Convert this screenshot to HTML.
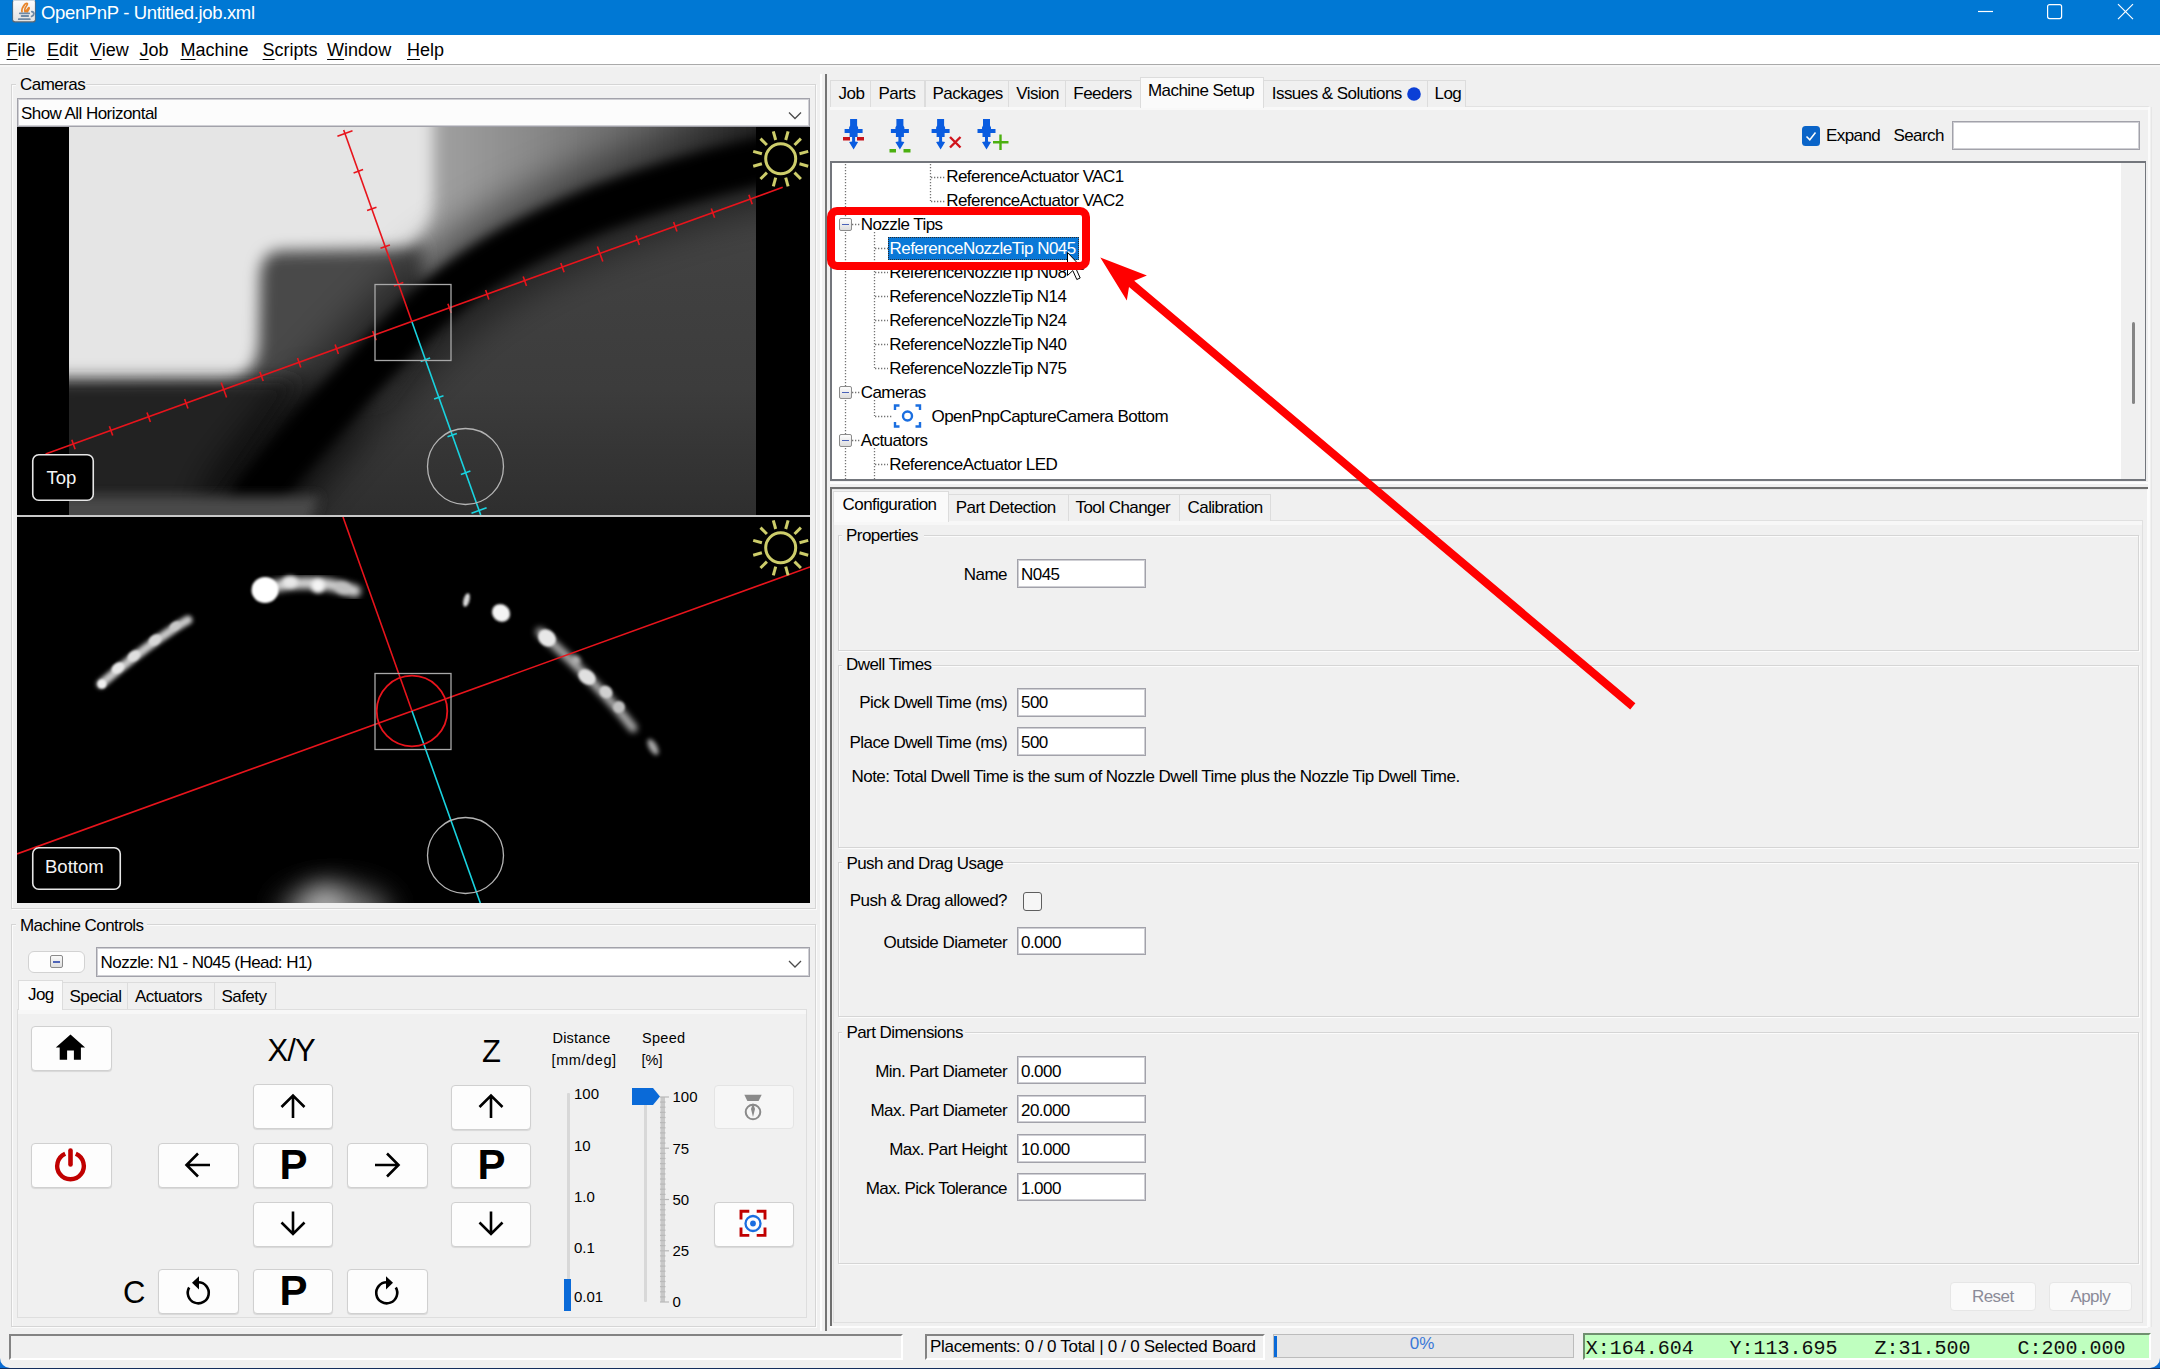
<!DOCTYPE html><html><head><meta charset="utf-8"><title>OpenPnP</title><style>
html,body{margin:0;padding:0;}
body{width:2160px;height:1369px;overflow:hidden;position:relative;background:#f0f0f0;font-family:"Liberation Sans", sans-serif;}
.a{position:absolute;box-sizing:border-box;}
.t{position:absolute;white-space:pre;}
.ff-s{font-family:"Liberation Sans", sans-serif;}
.ff-m{font-family:"Liberation Mono", monospace;}
svg{position:absolute;overflow:visible;}
u{text-decoration:underline;text-underline-offset:2.5px;text-decoration-thickness:1.4px;}
</style></head><body>
<div class="a" style="left:0px;top:0px;width:2160px;height:35px;background:#0078d4"></div>
<svg style="left:12px;top:0px" width="25" height="23" viewBox="0 0 25 23">
<defs><linearGradient id="jg" x1="0" y1="0" x2="0" y2="1"><stop offset="0" stop-color="#fdfdfd"/><stop offset="1" stop-color="#e2e2e2"/></linearGradient></defs>
<rect x="0.3" y="0" width="23.4" height="22.4" rx="2.5" fill="#5f6870"/>
<rect x="1.1" y="0" width="21.8" height="21.3" rx="2" fill="url(#jg)"/>
<rect x="1.1" y="0" width="21.8" height="1" fill="#cdd6de"/>
<path d="M10 11.8 C9.2 9 11 6.6 12.6 4.6 C13.4 3.6 14.8 2.8 15.4 3.6 C15.7 4.8 14 6.4 13.2 8 C12.7 9.2 12.6 10.4 13 11.8 M14 11.6 C14.4 10 15.8 9 16.6 7.8 C17 7.2 17.4 8 17 9 C16.4 10.4 15.6 11 15.3 12" stroke="#e8852a" stroke-width="1.7" fill="none" stroke-linecap="round"/>
<path d="M7.8 13.3 H17.2 M9.6 16 H16.2 M6.8 19.2 H17.8 M19.8 11.6 C22.6 12 22.6 15.6 19.6 16.4" stroke="#6f8aa6" stroke-width="1.8" fill="none" stroke-linecap="round"/>
</svg>
<div class="t ff-s" style="top:3.64px;font-size:18.5px;line-height:18.5px;color:#ffffff;left:41px;letter-spacing:-0.35px;">OpenPnP - Untitled.job.xml</div>
<svg style="left:1970px;top:0px" width="190" height="35" viewBox="1970 0 190 35">
<line x1="1978" y1="11.5" x2="1993" y2="11.5" stroke="#fff" stroke-width="1.2"/>
<rect x="2047.6" y="4.6" width="14" height="14" rx="2" fill="none" stroke="#fff" stroke-width="1.2"/>
<path d="M2118 4.2 L2133 19.2 M2133 4.2 L2118 19.2" stroke="#fff" stroke-width="1.2"/>
</svg>
<div class="a" style="left:0px;top:35px;width:2160px;height:29px;background:#ffffff"></div>
<div class="a" style="left:0px;top:64px;width:2160px;height:1.2px;background:#aaaaaa"></div>
<div class="a" style="left:0px;top:65px;width:2160px;height:2px;background:#f6f6f6"></div>
<div class="t ff-s" style="top:40.76px;font-size:18px;line-height:18px;color:#000;left:6.6px;"><u>F</u>ile</div>
<div class="t ff-s" style="top:40.76px;font-size:18px;line-height:18px;color:#000;left:47px;"><u>E</u>dit</div>
<div class="t ff-s" style="top:40.76px;font-size:18px;line-height:18px;color:#000;left:90px;"><u>V</u>iew</div>
<div class="t ff-s" style="top:40.76px;font-size:18px;line-height:18px;color:#000;left:139.6px;"><u>J</u>ob</div>
<div class="t ff-s" style="top:40.76px;font-size:18px;line-height:18px;color:#000;left:180.5px;"><u>M</u>achine</div>
<div class="t ff-s" style="top:40.76px;font-size:18px;line-height:18px;color:#000;left:262.6px;"><u>S</u>cripts</div>
<div class="t ff-s" style="top:40.76px;font-size:18px;line-height:18px;color:#000;left:327.1px;"><u>W</u>indow</div>
<div class="t ff-s" style="top:40.76px;font-size:18px;line-height:18px;color:#000;left:407px;"><u>H</u>elp</div>
<div class="a" style="left:11px;top:84px;width:805px;height:825px;border:1px solid #d5d5d5;box-shadow:inset 1px 1px 0 #fbfbfb, 1px 1px 0 #fbfbfb;"></div>
<div class="a" style="left:16px;top:81px;width:70px;height:6px;background:#f0f0f0"></div>
<div class="t ff-s" style="top:76.11px;font-size:17px;line-height:17px;color:#000;left:20px;letter-spacing:-0.55px;">Cameras</div>
<div class="a" style="left:17px;top:98px;width:793px;height:29px;background:#fcfcfc;border:1px solid #a2a2aa;box-shadow:inset 0 0 0 1px #cfcfd4;"></div>
<div class="t ff-s" style="top:105.11px;font-size:17px;line-height:17px;color:#000;left:21px;letter-spacing:-0.55px;">Show All Horizontal</div>
<svg style="left:0;top:0" width="1" height="1"><polyline points="789,112.5 795,118.5 801,112.5" fill="none" stroke="#4a4a4a" stroke-width="1.3"/></svg>
<svg style="left:17px;top:127px;overflow:hidden" width="793" height="388" viewBox="17 127 793 388">
<defs>
<filter id="bl4" filterUnits="userSpaceOnUse" x="-200" y="-200" width="1400" height="1000"><feGaussianBlur stdDeviation="4"/></filter>
<filter id="bl6" filterUnits="userSpaceOnUse" x="-200" y="-200" width="1400" height="1000"><feGaussianBlur stdDeviation="6"/></filter>
<filter id="bl8" filterUnits="userSpaceOnUse" x="-200" y="-200" width="1400" height="1000"><feGaussianBlur stdDeviation="7.5"/></filter>
<filter id="bl9" filterUnits="userSpaceOnUse" x="-200" y="-200" width="1400" height="1000"><feGaussianBlur stdDeviation="9"/></filter>
<filter id="bl18" filterUnits="userSpaceOnUse" x="-200" y="-200" width="1400" height="1000"><feGaussianBlur stdDeviation="18"/></filter>
<filter id="noise" filterUnits="userSpaceOnUse" x="17" y="127" width="793" height="388"><feTurbulence type="fractalNoise" baseFrequency="0.9" numOctaves="1" seed="3"/><feColorMatrix type="matrix" values="0 0 0 0 0.5  0 0 0 0 0.5  0 0 0 0 0.5  0 0 0 0.10 0"/></filter>
<linearGradient id="umid" x1="430" y1="0" x2="760" y2="0" gradientUnits="userSpaceOnUse">
<stop offset="0" stop-color="#a2a2a2"/><stop offset="0.3" stop-color="#8a8a8a"/><stop offset="0.65" stop-color="#666666"/><stop offset="1" stop-color="#333333"/></linearGradient>
<linearGradient id="lowr" x1="0" y1="200" x2="0" y2="515" gradientUnits="userSpaceOnUse">
<stop offset="0" stop-color="#434343"/><stop offset="0.6" stop-color="#3c3c3c"/><stop offset="1" stop-color="#2e2e2e"/></linearGradient>
</defs>
<rect x="17" y="127" width="793" height="388" fill="url(#lowr)"/>
<polygon points="400,90 820,90 820,145 700,168 600,198 520,235 450,275 400,300" fill="url(#umid)" filter="url(#bl6)"/>
<polygon points="240,250 420,240 430,330 380,400 240,400" fill="#4a4a4a" filter="url(#bl9)"/>
<path d="M40,90 L433,90 L433,196 C433,228 420,248 392,249 L280,251 C266,252 260,262 260,280 L259,342 C258,366 244,384 220,385 L40,387 Z" fill="#e5e5e5" filter="url(#bl8)"/>
<polygon points="40,380 300,380 240,470 215,505 40,505" fill="#232323" filter="url(#bl9)"/>
<path d="M330,400 C300,430 270,470 235,520" stroke="#000" stroke-width="70" stroke-opacity="0.55" fill="none" filter="url(#bl18)"/>
<path d="M830,150 L756,162 C720,170 660,186 600,208 C540,232 490,258 450,290 C420,314 390,345 350,388 C320,420 285,460 258,494 L235,540" stroke="#000" stroke-width="95" stroke-opacity="0.45" fill="none" filter="url(#bl18)"/>
<path d="M830,150 L756,162 C720,170 660,186 600,208 C540,232 490,258 450,290 C420,314 390,345 350,388 C320,420 285,460 258,494 L235,540" stroke="#000" stroke-width="47" fill="none" filter="url(#bl6)"/>
<polygon points="40,496 320,496 305,540 40,540" fill="#4a4a4a" filter="url(#bl6)"/>
<rect x="17" y="127" width="52" height="388" fill="#000"/>
<rect x="756" y="127" width="54" height="388" fill="#000"/>
<line x1="45.6" y1="454.0" x2="782.7" y2="187.3" stroke="#e8141c" stroke-width="1.6"/>
<line x1="343.7" y1="130.0" x2="412" y2="322" stroke="#e8141c" stroke-width="1.6"/>
<line x1="412" y1="322" x2="480.7" y2="515.0" stroke="#19d3e0" stroke-width="1.6"/>
<line x1="71.8" y1="439.8" x2="75.1" y2="449.2" stroke="#e8141c" stroke-width="1.6"/>
<line x1="109.4" y1="426.2" x2="112.7" y2="435.6" stroke="#e8141c" stroke-width="1.6"/>
<line x1="147.0" y1="412.5" x2="150.4" y2="422.0" stroke="#e8141c" stroke-width="1.6"/>
<line x1="184.6" y1="398.9" x2="188.0" y2="408.4" stroke="#e8141c" stroke-width="1.6"/>
<line x1="221.2" y1="382.5" x2="226.6" y2="397.6" stroke="#e8141c" stroke-width="1.6"/>
<line x1="259.9" y1="371.7" x2="263.2" y2="381.1" stroke="#e8141c" stroke-width="1.6"/>
<line x1="297.5" y1="358.1" x2="300.8" y2="367.5" stroke="#e8141c" stroke-width="1.6"/>
<line x1="335.1" y1="344.5" x2="338.4" y2="353.9" stroke="#e8141c" stroke-width="1.6"/>
<line x1="372.7" y1="330.9" x2="376.1" y2="340.3" stroke="#e8141c" stroke-width="1.6"/>
<line x1="447.9" y1="303.7" x2="451.3" y2="313.1" stroke="#e8141c" stroke-width="1.6"/>
<line x1="485.6" y1="290.1" x2="488.9" y2="299.5" stroke="#e8141c" stroke-width="1.6"/>
<line x1="523.2" y1="276.5" x2="526.5" y2="285.9" stroke="#e8141c" stroke-width="1.6"/>
<line x1="560.8" y1="262.9" x2="564.1" y2="272.3" stroke="#e8141c" stroke-width="1.6"/>
<line x1="597.4" y1="246.4" x2="602.8" y2="261.5" stroke="#e8141c" stroke-width="1.6"/>
<line x1="636.0" y1="235.6" x2="639.4" y2="245.1" stroke="#e8141c" stroke-width="1.6"/>
<line x1="673.6" y1="222.0" x2="677.0" y2="231.5" stroke="#e8141c" stroke-width="1.6"/>
<line x1="711.3" y1="208.4" x2="714.6" y2="217.8" stroke="#e8141c" stroke-width="1.6"/>
<line x1="748.9" y1="194.8" x2="752.2" y2="204.2" stroke="#e8141c" stroke-width="1.6"/>
<line x1="337.4" y1="136.3" x2="352.5" y2="130.8" stroke="#e8141c" stroke-width="1.6"/>
<line x1="353.6" y1="172.9" x2="363.1" y2="169.5" stroke="#e8141c" stroke-width="1.6"/>
<line x1="367.1" y1="210.6" x2="376.5" y2="207.2" stroke="#e8141c" stroke-width="1.6"/>
<line x1="380.5" y1="248.3" x2="389.9" y2="244.9" stroke="#e8141c" stroke-width="1.6"/>
<line x1="393.9" y1="286.0" x2="403.3" y2="282.6" stroke="#e8141c" stroke-width="1.6"/>
<line x1="420.7" y1="361.4" x2="430.1" y2="358.0" stroke="#19d3e0" stroke-width="1.6"/>
<line x1="434.1" y1="399.1" x2="443.5" y2="395.7" stroke="#19d3e0" stroke-width="1.6"/>
<line x1="447.5" y1="436.8" x2="456.9" y2="433.4" stroke="#19d3e0" stroke-width="1.6"/>
<line x1="460.9" y1="474.5" x2="470.4" y2="471.1" stroke="#19d3e0" stroke-width="1.6"/>
<line x1="471.5" y1="513.2" x2="486.6" y2="507.7" stroke="#19d3e0" stroke-width="1.6"/>
<rect x="375" y="284.5" width="76" height="76" fill="none" stroke="#a8a8a8" stroke-width="1.3"/>
<circle cx="465.5" cy="466.5" r="38" fill="none" stroke="#b4b4b4" stroke-width="1.3"/>
<circle cx="780.7" cy="158.8" r="15" fill="none" stroke="#cdcd6a" stroke-width="3"/>
<line x1="799.5" y1="163.8" x2="808.2" y2="166.2" stroke="#cdcd6a" stroke-width="3"/>
<line x1="794.5" y1="172.6" x2="800.9" y2="179.0" stroke="#cdcd6a" stroke-width="3"/>
<line x1="785.7" y1="177.6" x2="788.1" y2="186.3" stroke="#cdcd6a" stroke-width="3"/>
<line x1="775.7" y1="177.6" x2="773.3" y2="186.3" stroke="#cdcd6a" stroke-width="3"/>
<line x1="766.9" y1="172.6" x2="760.5" y2="179.0" stroke="#cdcd6a" stroke-width="3"/>
<line x1="761.9" y1="163.8" x2="753.2" y2="166.2" stroke="#cdcd6a" stroke-width="3"/>
<line x1="761.9" y1="153.8" x2="753.2" y2="151.4" stroke="#cdcd6a" stroke-width="3"/>
<line x1="766.9" y1="145.0" x2="760.5" y2="138.6" stroke="#cdcd6a" stroke-width="3"/>
<line x1="775.7" y1="140.0" x2="773.3" y2="131.3" stroke="#cdcd6a" stroke-width="3"/>
<line x1="785.7" y1="140.0" x2="788.1" y2="131.3" stroke="#cdcd6a" stroke-width="3"/>
<line x1="794.5" y1="145.0" x2="800.9" y2="138.6" stroke="#cdcd6a" stroke-width="3"/>
<line x1="799.5" y1="153.8" x2="808.2" y2="151.4" stroke="#cdcd6a" stroke-width="3"/>
<rect x="32.75" y="454.75" width="60.5" height="45.5" rx="6" fill="#000" stroke="#e6e6e6" stroke-width="1.6"/>
</svg>
<div class="t ff-s" style="top:469.44px;font-size:18.5px;line-height:18.5px;color:#f4f4f4;left:46.5px;">Top</div>
<div class="a" style="left:17px;top:515px;width:793px;height:2px;background:#c8c8c8"></div>
<svg style="left:17px;top:517px;overflow:hidden" width="793" height="386" viewBox="17 517 793 386">
<defs>
<filter id="bb1" x="-100%" y="-100%" width="300%" height="300%"><feGaussianBlur stdDeviation="1"/></filter>
<filter id="bb2" x="-100%" y="-100%" width="300%" height="300%"><feGaussianBlur stdDeviation="2"/></filter>
<filter id="bb3" x="-100%" y="-100%" width="300%" height="300%"><feGaussianBlur stdDeviation="3"/></filter>
<filter id="bb10" x="-100%" y="-100%" width="300%" height="300%"><feGaussianBlur stdDeviation="14"/></filter>
</defs>
<rect x="17" y="517" width="793" height="386" fill="#000"/>
<path d="M272,587 C290,582 318,582 336,586 C344,588 350,590 355,591" stroke="#d0d0d0" stroke-width="12" stroke-linecap="round" fill="none" filter="url(#bb3)"/><ellipse cx="265" cy="590" rx="13.5" ry="13" transform="rotate(0 265 590)" fill="#ffffff" filter="url(#bb1)"/><ellipse cx="318" cy="586" rx="7" ry="7" transform="rotate(0 318 586)" fill="#f4f4f4" filter="url(#bb2)"/><ellipse cx="290" cy="582" rx="8" ry="6" transform="rotate(0 290 582)" fill="#e8e8e8" filter="url(#bb2)"/><ellipse cx="343" cy="588" rx="8" ry="6" transform="rotate(10 343 588)" fill="#c0c0c0" filter="url(#bb2)"/><path d="M101,684 C120,668 140,652 160,638 C172,630 180,624 188,620" stroke="#c8c8c8" stroke-width="9" stroke-linecap="round" fill="none" filter="url(#bb2)"/><ellipse cx="118" cy="668" rx="7" ry="5" transform="rotate(-35 118 668)" fill="#e8e8e8" filter="url(#bb1)"/><ellipse cx="134" cy="656" rx="7" ry="5" transform="rotate(-35 134 656)" fill="#e0e0e0" filter="url(#bb1)"/><ellipse cx="155" cy="640" rx="7" ry="5" transform="rotate(-35 155 640)" fill="#d8d8d8" filter="url(#bb1)"/><ellipse cx="102" cy="684" rx="4.5" ry="4.5" transform="rotate(0 102 684)" fill="#f0f0f0" filter="url(#bb1)"/><ellipse cx="175" cy="626" rx="6" ry="4" transform="rotate(-35 175 626)" fill="#c8c8c8" filter="url(#bb1)"/><ellipse cx="466.5" cy="600" rx="3" ry="7" transform="rotate(15 466.5 600)" fill="#d8d8d8" filter="url(#bb1)"/><ellipse cx="501" cy="613" rx="9.5" ry="8.5" transform="rotate(40 501 613)" fill="#f4f4f4" filter="url(#bb1)"/><path d="M540,632 C560,650 580,668 600,690 C615,705 625,718 633,728" stroke="#a8a8a8" stroke-width="9" stroke-linecap="round" fill="none" filter="url(#bb3)"/><ellipse cx="547" cy="638" rx="9.5" ry="8" transform="rotate(40 547 638)" fill="#e8e8e8" filter="url(#bb1)"/><ellipse cx="576" cy="660" rx="5" ry="4" transform="rotate(40 576 660)" fill="#b8b8b8" filter="url(#bb2)"/><ellipse cx="587" cy="677" rx="9.5" ry="7" transform="rotate(35 587 677)" fill="#e0e0e0" filter="url(#bb1)"/><ellipse cx="606" cy="692" rx="7" ry="6" transform="rotate(40 606 692)" fill="#d0d0d0" filter="url(#bb1)"/><ellipse cx="619" cy="707" rx="6" ry="6" transform="rotate(50 619 707)" fill="#c0c0c0" filter="url(#bb1)"/><ellipse cx="653" cy="747" rx="4" ry="9" transform="rotate(-30 653 747)" fill="#a8a8a8" filter="url(#bb2)"/>
<ellipse cx="335" cy="912" rx="55" ry="26" fill="#707070" filter="url(#bb10)"/><ellipse cx="325" cy="908" rx="18" ry="20" fill="#c0c0c0" filter="url(#bb10)"/>
<line x1="17.0" y1="853.9" x2="810.0" y2="567.0" stroke="#e8141c" stroke-width="1.6"/>
<line x1="343.0" y1="517.0" x2="412" y2="711" stroke="#e8141c" stroke-width="1.6"/>
<line x1="412" y1="711" x2="480.3" y2="903.0" stroke="#19d3e0" stroke-width="1.6"/>
<rect x="375" y="673.5" width="76" height="76" fill="none" stroke="#a8a8a8" stroke-width="1.3"/>
<circle cx="465.5" cy="855.5" r="38" fill="none" stroke="#b4b4b4" stroke-width="1.3"/>
<circle cx="412" cy="711" r="35.3" fill="none" stroke="#e8141c" stroke-width="1.8"/>
<circle cx="780.7" cy="547.8" r="15" fill="none" stroke="#cdcd6a" stroke-width="3"/>
<line x1="799.5" y1="552.8" x2="808.2" y2="555.2" stroke="#cdcd6a" stroke-width="3"/>
<line x1="794.5" y1="561.6" x2="800.9" y2="568.0" stroke="#cdcd6a" stroke-width="3"/>
<line x1="785.7" y1="566.6" x2="788.1" y2="575.3" stroke="#cdcd6a" stroke-width="3"/>
<line x1="775.7" y1="566.6" x2="773.3" y2="575.3" stroke="#cdcd6a" stroke-width="3"/>
<line x1="766.9" y1="561.6" x2="760.5" y2="568.0" stroke="#cdcd6a" stroke-width="3"/>
<line x1="761.9" y1="552.8" x2="753.2" y2="555.2" stroke="#cdcd6a" stroke-width="3"/>
<line x1="761.9" y1="542.8" x2="753.2" y2="540.4" stroke="#cdcd6a" stroke-width="3"/>
<line x1="766.9" y1="534.0" x2="760.5" y2="527.6" stroke="#cdcd6a" stroke-width="3"/>
<line x1="775.7" y1="529.0" x2="773.3" y2="520.3" stroke="#cdcd6a" stroke-width="3"/>
<line x1="785.7" y1="529.0" x2="788.1" y2="520.3" stroke="#cdcd6a" stroke-width="3"/>
<line x1="794.5" y1="534.0" x2="800.9" y2="527.6" stroke="#cdcd6a" stroke-width="3"/>
<line x1="799.5" y1="542.8" x2="808.2" y2="540.4" stroke="#cdcd6a" stroke-width="3"/>
<rect x="32.75" y="847.75" width="87.5" height="41.5" rx="6" fill="#000" stroke="#e6e6e6" stroke-width="1.6"/>
</svg>
<div class="t ff-s" style="top:858.34px;font-size:18.5px;line-height:18.5px;color:#f4f4f4;left:45px;">Bottom</div>
<div class="a" style="left:11px;top:924px;width:805px;height:403px;border:1px solid #d5d5d5;box-shadow:inset 1px 1px 0 #fbfbfb, 1px 1px 0 #fbfbfb;"></div>
<div class="a" style="left:16px;top:921px;width:131px;height:6px;background:#f0f0f0"></div>
<div class="t ff-s" style="top:916.61px;font-size:17px;line-height:17px;color:#000;left:20px;letter-spacing:-0.55px;">Machine Controls</div>
<div class="a" style="left:28px;top:951px;width:57px;height:22px;background:#fdfdfd;border:1px solid #d2d2d2;border-radius:6px;"></div>
<div class="a" style="left:50px;top:955px;width:13px;height:13px;border:1px solid #8a8a8a;border-radius:2px;background:linear-gradient(#fafafa,#dedede);"></div>
<div class="a" style="left:53px;top:961px;width:7px;height:1.5px;background:#4e64b8"></div>
<div class="a" style="left:96px;top:947px;width:714px;height:30px;background:#ffffff;border:1px solid #a2a2aa;box-shadow:inset 0 0 0 1px #cfcfd4;"></div>
<div class="t ff-s" style="top:953.91px;font-size:17px;line-height:17px;color:#000;left:100.6px;letter-spacing:-0.55px;">Nozzle: N1 - N045 (Head: H1)</div>
<svg style="left:0;top:0" width="1" height="1"><polyline points="789,961 795,967 801,961" fill="none" stroke="#4a4a4a" stroke-width="1.3"/></svg>
<div class="a" style="left:17px;top:1009px;width:790px;height:309px;border:1px solid #dedede;background:#f0f0f0;box-shadow:inset 0 4px 0 #f7f7f7;"></div>
<div class="a" style="left:62px;top:982px;width:66px;height:27px;background:#f0f0f0;border:1px solid #dcdcdc;border-bottom:none;"></div>
<div class="t ff-s" style="top:988.11px;font-size:17px;line-height:17px;color:#000;left:69.5px;letter-spacing:-0.55px;">Special</div>
<div class="a" style="left:127px;top:982px;width:88px;height:27px;background:#f0f0f0;border:1px solid #dcdcdc;border-bottom:none;"></div>
<div class="t ff-s" style="top:988.11px;font-size:17px;line-height:17px;color:#000;left:135px;letter-spacing:-0.55px;">Actuators</div>
<div class="a" style="left:214px;top:982px;width:62px;height:27px;background:#f0f0f0;border:1px solid #dcdcdc;border-bottom:none;"></div>
<div class="t ff-s" style="top:988.11px;font-size:17px;line-height:17px;color:#000;left:221.5px;letter-spacing:-0.55px;">Safety</div>
<div class="a" style="left:18px;top:980px;width:45px;height:30px;background:#fafafa;border:1px solid #dcdcdc;border-bottom:none;"></div>
<div class="t ff-s" style="top:985.61px;font-size:17px;line-height:17px;color:#000;left:28px;letter-spacing:-0.55px;">Jog</div>
<div class="a" style="left:31px;top:1026px;width:81px;height:45px;background:#fdfdfd;border:1px solid #d0d0d0;border-radius:4px;box-shadow:0 1px 1px rgba(0,0,0,0.10);"></div>
<div class="a" style="left:252.6px;top:1084.4px;width:80.9px;height:44.899999999999864px;background:#fdfdfd;border:1px solid #d0d0d0;border-radius:4px;box-shadow:0 1px 1px rgba(0,0,0,0.10);"></div>
<div class="a" style="left:30.6px;top:1143px;width:81.0px;height:45.299999999999955px;background:#fdfdfd;border:1px solid #d0d0d0;border-radius:4px;box-shadow:0 1px 1px rgba(0,0,0,0.10);"></div>
<div class="a" style="left:158.3px;top:1143px;width:81.1px;height:45.299999999999955px;background:#fdfdfd;border:1px solid #d0d0d0;border-radius:4px;box-shadow:0 1px 1px rgba(0,0,0,0.10);"></div>
<div class="a" style="left:252.6px;top:1143px;width:80.9px;height:45.299999999999955px;background:#fdfdfd;border:1px solid #d0d0d0;border-radius:4px;box-shadow:0 1px 1px rgba(0,0,0,0.10);"></div>
<div class="a" style="left:347.3px;top:1143px;width:80.89999999999998px;height:45.299999999999955px;background:#fdfdfd;border:1px solid #d0d0d0;border-radius:4px;box-shadow:0 1px 1px rgba(0,0,0,0.10);"></div>
<div class="a" style="left:252.6px;top:1202px;width:80.9px;height:44.5px;background:#fdfdfd;border:1px solid #d0d0d0;border-radius:4px;box-shadow:0 1px 1px rgba(0,0,0,0.10);"></div>
<div class="a" style="left:158.3px;top:1269px;width:81.1px;height:45px;background:#fdfdfd;border:1px solid #d0d0d0;border-radius:4px;box-shadow:0 1px 1px rgba(0,0,0,0.10);"></div>
<div class="a" style="left:252.6px;top:1269px;width:80.9px;height:45px;background:#fdfdfd;border:1px solid #d0d0d0;border-radius:4px;box-shadow:0 1px 1px rgba(0,0,0,0.10);"></div>
<div class="a" style="left:347.3px;top:1269px;width:80.89999999999998px;height:45px;background:#fdfdfd;border:1px solid #d0d0d0;border-radius:4px;box-shadow:0 1px 1px rgba(0,0,0,0.10);"></div>
<div class="a" style="left:451px;top:1085px;width:80.39999999999998px;height:45px;background:#fdfdfd;border:1px solid #d0d0d0;border-radius:4px;box-shadow:0 1px 1px rgba(0,0,0,0.10);"></div>
<div class="a" style="left:451px;top:1143px;width:80.39999999999998px;height:45.299999999999955px;background:#fdfdfd;border:1px solid #d0d0d0;border-radius:4px;box-shadow:0 1px 1px rgba(0,0,0,0.10);"></div>
<div class="a" style="left:451px;top:1202px;width:80.39999999999998px;height:44.5px;background:#fdfdfd;border:1px solid #d0d0d0;border-radius:4px;box-shadow:0 1px 1px rgba(0,0,0,0.10);"></div>
<div class="a" style="left:714px;top:1202px;width:80px;height:44.5px;background:#fdfdfd;border:1px solid #d0d0d0;border-radius:4px;box-shadow:0 1px 1px rgba(0,0,0,0.10);"></div>
<div class="a" style="left:714px;top:1085px;width:80px;height:44px;background:#f6f6f6;border:1px solid #e4e4e4;border-radius:4px;"></div>
<svg style="left:0;top:0" width="1" height="1">
<!-- home -->
<path d="M70.5 1034.4 L55.8 1047.6 L59.7 1047.6 V1059.8 H67.1 V1050.6 H73.9 V1059.8 H80.9 V1047.6 H85.1 Z" fill="#000"/>
<!-- power -->
<path d="M65.2 1153.8 A13.3 13.3 0 1 0 75.8 1153.8" fill="none" stroke="#c00000" stroke-width="4.4"/>
<line x1="70.5" y1="1150.5" x2="70.5" y2="1164.5" stroke="#c00000" stroke-width="4.6" stroke-linecap="round"/>
<!-- arrows -->
<g stroke="#000" stroke-width="2.6" fill="none" stroke-linejoin="miter" stroke-linecap="butt">
<path d="M293 1118 V1096 M281.5 1107 L293 1095.5 L304.5 1107"/>
<path d="M491 1118 V1096 M479.5 1107 L491 1095.5 L502.5 1107"/>
<path d="M293 1211.5 V1233.5 M281.5 1222.5 L293 1234 L304.5 1222.5"/>
<path d="M491 1211.5 V1233.5 M479.5 1222.5 L491 1234 L502.5 1222.5"/>
<path d="M210 1165 H187 M198 1153.5 L186.5 1165 L198 1176.5"/>
<path d="M375 1165 H398 M387 1153.5 L398.5 1165 L387 1176.5"/>
</g>
<!-- rotate -->
<g stroke="#000" stroke-width="2.6" fill="none">
<path d="M198.3 1282.3 A10.5 10.5 0 1 1 189.2 1287.5"/>
<path d="M386.7 1282.3 A10.5 10.5 0 1 0 395.8 1287.5"/>
</g>
<path d="M192 1282.8 L199 1276.2 L199 1289.5 Z" fill="#000"/>
<path d="M393 1282.8 L386 1276.2 L386 1289.5 Z" fill="#000"/>
<!-- camera center -->
<g fill="none" stroke="#c00000" stroke-width="2.9">
<path d="M741 1219.5 V1211.2 H749.3 M756.7 1211.2 H765 V1219.5 M765 1227.5 V1235.4 H756.7 M749.3 1235.4 H741 V1227.5"/>
</g>
<circle cx="753" cy="1223.5" r="7.5" fill="none" stroke="#1a6ee0" stroke-width="2.3"/>
<circle cx="753" cy="1223.5" r="2.9" fill="#1a6ee0"/>
<!-- disabled nozzle icon -->
<path d="M744.3 1094.7 H761.7 L758.6 1101.1 H747.4 Z" fill="#8a8a8a"/>
<circle cx="753" cy="1112" r="7.3" fill="none" stroke="#8a8a8a" stroke-width="2"/>
<path d="M753 1103 L755 1109 L754 1113 L753 1117 L752 1113 L751 1109 Z" fill="#8a8a8a"/>
</svg>
<div class="t ff-s" style="top:1143.95px;font-size:42px;line-height:42px;color:#000;left:-106.5px;width:800px;text-align:center;font-weight:bold;">P</div>
<div class="t ff-s" style="top:1143.95px;font-size:42px;line-height:42px;color:#000;left:91.5px;width:800px;text-align:center;font-weight:bold;">P</div>
<div class="t ff-s" style="top:1270.45px;font-size:42px;line-height:42px;color:#000;left:-106.5px;width:800px;text-align:center;font-weight:bold;">P</div>
<div class="t ff-s" style="top:1035.26px;font-size:31px;line-height:31px;color:#000;left:267.6px;letter-spacing:-1px;">X/Y</div>
<div class="t ff-s" style="top:1035.76px;font-size:31px;line-height:31px;color:#000;left:482px;">Z</div>
<div class="t ff-s" style="top:1277.26px;font-size:31px;line-height:31px;color:#000;left:123px;">C</div>
<div class="t ff-s" style="top:1031.03px;font-size:14.5px;line-height:14.5px;color:#000;left:552.5px;letter-spacing:0.2px;">Distance</div>
<div class="t ff-s" style="top:1053.03px;font-size:14.5px;line-height:14.5px;color:#000;left:551.5px;letter-spacing:0.6px;">[mm/deg]</div>
<div class="t ff-s" style="top:1031.03px;font-size:14.5px;line-height:14.5px;color:#000;left:642px;letter-spacing:0.3px;">Speed</div>
<div class="t ff-s" style="top:1053.03px;font-size:14.5px;line-height:14.5px;color:#000;left:641.5px;">[%]</div>
<div class="a" style="left:566.5px;top:1092.5px;width:3px;height:218px;background:#d8d8d8;border-radius:1px;"></div>
<div class="a" style="left:564.3px;top:1279px;width:7px;height:31.5px;background:#0a6ad8;"></div>
<div class="t ff-s" style="top:1086.10px;font-size:15px;line-height:15px;color:#000;left:574px;">100</div>
<div class="t ff-s" style="top:1137.50px;font-size:15px;line-height:15px;color:#000;left:574px;">10</div>
<div class="t ff-s" style="top:1188.50px;font-size:15px;line-height:15px;color:#000;left:574px;">1.0</div>
<div class="t ff-s" style="top:1239.50px;font-size:15px;line-height:15px;color:#000;left:574px;">0.1</div>
<div class="t ff-s" style="top:1288.60px;font-size:15px;line-height:15px;color:#000;left:574px;">0.01</div>
<div class="a" style="left:644px;top:1097px;width:3px;height:205px;background:#d8d8d8;border-radius:1px;"></div>
<svg style="left:0;top:0" width="1" height="1"><path d="M632 1088 H653 L660 1096.5 L653 1105 H632 Z" fill="#0a6ad8"/></svg>
<svg style="left:0;top:0" width="1" height="1"><rect x="660.5" y="1097" width="4.5" height="205" fill="#c8c8c8"/><line x1="660" y1="1097.0" x2="669" y2="1097.0" stroke="#b9b9b9" stroke-width="1.2"/><line x1="660" y1="1102.1" x2="665.5" y2="1102.1" stroke="#b9b9b9" stroke-width="1.2"/><line x1="660" y1="1107.2" x2="665.5" y2="1107.2" stroke="#b9b9b9" stroke-width="1.2"/><line x1="660" y1="1112.4" x2="665.5" y2="1112.4" stroke="#b9b9b9" stroke-width="1.2"/><line x1="660" y1="1117.5" x2="665.5" y2="1117.5" stroke="#b9b9b9" stroke-width="1.2"/><line x1="660" y1="1122.6" x2="665.5" y2="1122.6" stroke="#b9b9b9" stroke-width="1.2"/><line x1="660" y1="1127.8" x2="665.5" y2="1127.8" stroke="#b9b9b9" stroke-width="1.2"/><line x1="660" y1="1132.9" x2="665.5" y2="1132.9" stroke="#b9b9b9" stroke-width="1.2"/><line x1="660" y1="1138.0" x2="665.5" y2="1138.0" stroke="#b9b9b9" stroke-width="1.2"/><line x1="660" y1="1143.1" x2="665.5" y2="1143.1" stroke="#b9b9b9" stroke-width="1.2"/><line x1="660" y1="1148.2" x2="669" y2="1148.2" stroke="#b9b9b9" stroke-width="1.2"/><line x1="660" y1="1153.4" x2="665.5" y2="1153.4" stroke="#b9b9b9" stroke-width="1.2"/><line x1="660" y1="1158.5" x2="665.5" y2="1158.5" stroke="#b9b9b9" stroke-width="1.2"/><line x1="660" y1="1163.6" x2="665.5" y2="1163.6" stroke="#b9b9b9" stroke-width="1.2"/><line x1="660" y1="1168.8" x2="665.5" y2="1168.8" stroke="#b9b9b9" stroke-width="1.2"/><line x1="660" y1="1173.9" x2="665.5" y2="1173.9" stroke="#b9b9b9" stroke-width="1.2"/><line x1="660" y1="1179.0" x2="665.5" y2="1179.0" stroke="#b9b9b9" stroke-width="1.2"/><line x1="660" y1="1184.1" x2="665.5" y2="1184.1" stroke="#b9b9b9" stroke-width="1.2"/><line x1="660" y1="1189.2" x2="665.5" y2="1189.2" stroke="#b9b9b9" stroke-width="1.2"/><line x1="660" y1="1194.4" x2="665.5" y2="1194.4" stroke="#b9b9b9" stroke-width="1.2"/><line x1="660" y1="1199.5" x2="669" y2="1199.5" stroke="#b9b9b9" stroke-width="1.2"/><line x1="660" y1="1204.6" x2="665.5" y2="1204.6" stroke="#b9b9b9" stroke-width="1.2"/><line x1="660" y1="1209.8" x2="665.5" y2="1209.8" stroke="#b9b9b9" stroke-width="1.2"/><line x1="660" y1="1214.9" x2="665.5" y2="1214.9" stroke="#b9b9b9" stroke-width="1.2"/><line x1="660" y1="1220.0" x2="665.5" y2="1220.0" stroke="#b9b9b9" stroke-width="1.2"/><line x1="660" y1="1225.1" x2="665.5" y2="1225.1" stroke="#b9b9b9" stroke-width="1.2"/><line x1="660" y1="1230.2" x2="665.5" y2="1230.2" stroke="#b9b9b9" stroke-width="1.2"/><line x1="660" y1="1235.4" x2="665.5" y2="1235.4" stroke="#b9b9b9" stroke-width="1.2"/><line x1="660" y1="1240.5" x2="665.5" y2="1240.5" stroke="#b9b9b9" stroke-width="1.2"/><line x1="660" y1="1245.6" x2="665.5" y2="1245.6" stroke="#b9b9b9" stroke-width="1.2"/><line x1="660" y1="1250.8" x2="669" y2="1250.8" stroke="#b9b9b9" stroke-width="1.2"/><line x1="660" y1="1255.9" x2="665.5" y2="1255.9" stroke="#b9b9b9" stroke-width="1.2"/><line x1="660" y1="1261.0" x2="665.5" y2="1261.0" stroke="#b9b9b9" stroke-width="1.2"/><line x1="660" y1="1266.1" x2="665.5" y2="1266.1" stroke="#b9b9b9" stroke-width="1.2"/><line x1="660" y1="1271.2" x2="665.5" y2="1271.2" stroke="#b9b9b9" stroke-width="1.2"/><line x1="660" y1="1276.4" x2="665.5" y2="1276.4" stroke="#b9b9b9" stroke-width="1.2"/><line x1="660" y1="1281.5" x2="665.5" y2="1281.5" stroke="#b9b9b9" stroke-width="1.2"/><line x1="660" y1="1286.6" x2="665.5" y2="1286.6" stroke="#b9b9b9" stroke-width="1.2"/><line x1="660" y1="1291.8" x2="665.5" y2="1291.8" stroke="#b9b9b9" stroke-width="1.2"/><line x1="660" y1="1296.9" x2="665.5" y2="1296.9" stroke="#b9b9b9" stroke-width="1.2"/><line x1="660" y1="1302.0" x2="669" y2="1302.0" stroke="#b9b9b9" stroke-width="1.2"/></svg>
<div class="t ff-s" style="top:1088.80px;font-size:15px;line-height:15px;color:#000;left:672.5px;">100</div>
<div class="t ff-s" style="top:1140.90px;font-size:15px;line-height:15px;color:#000;left:672.5px;">75</div>
<div class="t ff-s" style="top:1191.90px;font-size:15px;line-height:15px;color:#000;left:672.5px;">50</div>
<div class="t ff-s" style="top:1242.90px;font-size:15px;line-height:15px;color:#000;left:672.5px;">25</div>
<div class="t ff-s" style="top:1293.80px;font-size:15px;line-height:15px;color:#000;left:672.5px;">0</div>
<div class="a" style="left:820px;top:74px;width:1.5px;height:1257px;background:#fcfcfc"></div>
<div class="a" style="left:825px;top:74px;width:1.5px;height:1257px;background:#747474"></div>
<div class="a" style="left:830px;top:106px;width:1319px;height:1221px;background:#f0f0f0;border-top:1px solid #e2e2e2;border-right:1px solid #e8e8e8;box-shadow:inset 0 3px 0 #f8f8f8;"></div>
<div class="a" style="left:2148px;top:107px;width:1.5px;height:1220px;background:#fbfbfb"></div>
<div class="a" style="left:2151px;top:107px;width:1px;height:1220px;background:#e6e6e6"></div>
<div class="a" style="left:830px;top:80px;width:41.39999999999998px;height:26.5px;background:#f0f0f0;border:1px solid #dcdcdc;border-bottom:none;"></div>
<div class="t ff-s" style="top:84.51px;font-size:17px;line-height:17px;color:#000;left:838.6px;letter-spacing:-0.55px;">Job</div>
<div class="a" style="left:870.4px;top:80px;width:55.10000000000002px;height:26.5px;background:#f0f0f0;border:1px solid #dcdcdc;border-bottom:none;"></div>
<div class="t ff-s" style="top:84.51px;font-size:17px;line-height:17px;color:#000;left:878.5px;letter-spacing:-0.55px;">Parts</div>
<div class="a" style="left:924.5px;top:80px;width:84.70000000000005px;height:26.5px;background:#f0f0f0;border:1px solid #dcdcdc;border-bottom:none;"></div>
<div class="t ff-s" style="top:84.51px;font-size:17px;line-height:17px;color:#000;left:932.5px;letter-spacing:-0.55px;">Packages</div>
<div class="a" style="left:1008.2px;top:80px;width:58.09999999999991px;height:26.5px;background:#f0f0f0;border:1px solid #dcdcdc;border-bottom:none;"></div>
<div class="t ff-s" style="top:84.51px;font-size:17px;line-height:17px;color:#000;left:1016.3px;letter-spacing:-0.55px;">Vision</div>
<div class="a" style="left:1065.3px;top:80px;width:75.5px;height:26.5px;background:#f0f0f0;border:1px solid #dcdcdc;border-bottom:none;"></div>
<div class="t ff-s" style="top:84.51px;font-size:17px;line-height:17px;color:#000;left:1073.3px;letter-spacing:-0.55px;">Feeders</div>
<div class="a" style="left:1263.2px;top:80px;width:164.70000000000005px;height:26.5px;background:#f0f0f0;border:1px solid #dcdcdc;border-bottom:none;"></div>
<div class="t ff-s" style="top:84.51px;font-size:17px;line-height:17px;color:#000;left:1271.8px;letter-spacing:-0.55px;">Issues &amp; Solutions</div>
<svg style="left:0;top:0" width="1" height="1"><circle cx="1414" cy="94" r="6.8" fill="#0b3fd6"/></svg>
<div class="a" style="left:1426.9px;top:80px;width:39.5px;height:26.5px;background:#f0f0f0;border:1px solid #dcdcdc;border-bottom:none;"></div>
<div class="t ff-s" style="top:84.51px;font-size:17px;line-height:17px;color:#000;left:1434.5px;letter-spacing:-0.55px;">Log</div>
<div class="a" style="left:1140px;top:77px;width:124.20000000000005px;height:31px;background:#fafafa;border:1px solid #dcdcdc;border-bottom:none;"></div>
<div class="t ff-s" style="top:81.81px;font-size:17px;line-height:17px;color:#000;left:1148px;letter-spacing:-0.55px;">Machine Setup</div>
<svg style="left:0;top:0" width="1" height="1"><path d="M850.1 119 H857.1 V125.5 L858.1 127.5 V129 H862.6 V133 H857.6 V137 H855.1 V141.5 L858.1 142 L853.6 149.5 L849.1 142 L852.1 141.5 V137 H849.6 V133 H844.6 V129 H849.1 V127.5 L850.1 125.5 Z" fill="#0a5ce0"/><rect x="843" y="137" width="7" height="3.5" fill="#c8141c"/><rect x="857" y="137" width="7" height="3.5" fill="#c8141c"/><path d="M896.4 119 H903.4 V125.5 L904.4 127.5 V129 H908.9 V133 H903.9 V137 H901.4 V141.5 L904.4 142 L899.9 149.5 L895.4 142 L898.4 141.5 V137 H895.9 V133 H890.9 V129 H895.4 V127.5 L896.4 125.5 Z" fill="#0a5ce0"/><rect x="889.5" y="149" width="6.5" height="3.5" fill="#4cb010"/><rect x="903.5" y="149" width="7" height="3.5" fill="#4cb010"/><path d="M937.1 119 H944.1 V125.5 L945.1 127.5 V129 H949.6 V133 H944.6 V137 H942.1 V141.5 L945.1 142 L940.6 149.5 L936.1 142 L939.1 141.5 V137 H936.6 V133 H931.6 V129 H936.1 V127.5 L937.1 125.5 Z" fill="#0a5ce0"/><path d="M950 137 L960.5 147.5 M960.5 137 L950 147.5" stroke="#d0141c" stroke-width="2.4"/><path d="M983.0 119 H990.0 V125.5 L991.0 127.5 V129 H995.5 V133 H990.5 V137 H988.0 V141.5 L991.0 142 L986.5 149.5 L982.0 142 L985.0 141.5 V137 H982.5 V133 H977.5 V129 H982.0 V127.5 L983.0 125.5 Z" fill="#0a5ce0"/><path d="M1000.5 134.5 V150 M993 142.3 H1008.5" stroke="#4cb010" stroke-width="2.4"/></svg>
<div class="a" style="left:1801.8px;top:126.4px;width:18.6px;height:19.2px;background:#0a64c8;border-radius:3.5px;"></div>
<svg style="left:0;top:0" width="1" height="1"><polyline points="1806.5,136.5 1809.8,139.8 1815.5,132.5" fill="none" stroke="#fff" stroke-width="1.5"/></svg>
<div class="t ff-s" style="top:126.71px;font-size:17px;line-height:17px;color:#000;left:1825.9px;letter-spacing:-0.55px;">Expand</div>
<div class="t ff-s" style="top:126.71px;font-size:17px;line-height:17px;color:#000;left:1893.4px;letter-spacing:-0.55px;">Search</div>
<div class="a" style="left:1952px;top:121.3px;width:188px;height:28.500000000000014px;background:#ffffff;border:1px solid #a2a2aa;box-shadow:inset 0 0 0 1px #cfcfd4;"></div>
<div class="a" style="left:830px;top:161px;width:1316px;height:320px;background:#ffffff;border:2px solid #73767c;"></div>
<div class="a" style="left:2121px;top:163px;width:24px;height:316px;background:#f0f0f0"></div>
<div class="a" style="left:2131.5px;top:321.8px;width:3px;height:82px;background:#858585;border-radius:1.5px;"></div>
<svg style="left:0;top:0" width="1" height="1"><line x1="845.5" y1="164" x2="845.5" y2="218" stroke="#747474" stroke-width="1.3" stroke-dasharray="1.3 1.7"/><line x1="845.5" y1="232" x2="845.5" y2="386" stroke="#747474" stroke-width="1.3" stroke-dasharray="1.3 1.7"/><line x1="845.5" y1="400" x2="845.5" y2="434" stroke="#747474" stroke-width="1.3" stroke-dasharray="1.3 1.7"/><line x1="845.5" y1="448" x2="845.5" y2="479" stroke="#747474" stroke-width="1.3" stroke-dasharray="1.3 1.7"/><line x1="930.5" y1="164" x2="930.5" y2="201" stroke="#747474" stroke-width="1.3" stroke-dasharray="1.3 1.7"/><line x1="931" y1="177.5" x2="945" y2="177.5" stroke="#747474" stroke-width="1.3" stroke-dasharray="1.3 1.7"/><line x1="931" y1="201.5" x2="945" y2="201.5" stroke="#747474" stroke-width="1.3" stroke-dasharray="1.3 1.7"/><line x1="874.5" y1="232" x2="874.5" y2="368" stroke="#747474" stroke-width="1.3" stroke-dasharray="1.3 1.7"/><line x1="875" y1="248.5" x2="888" y2="248.5" stroke="#747474" stroke-width="1.3" stroke-dasharray="1.3 1.7"/><line x1="875" y1="272.5" x2="888" y2="272.5" stroke="#747474" stroke-width="1.3" stroke-dasharray="1.3 1.7"/><line x1="875" y1="296.5" x2="888" y2="296.5" stroke="#747474" stroke-width="1.3" stroke-dasharray="1.3 1.7"/><line x1="875" y1="320.5" x2="888" y2="320.5" stroke="#747474" stroke-width="1.3" stroke-dasharray="1.3 1.7"/><line x1="875" y1="344.5" x2="888" y2="344.5" stroke="#747474" stroke-width="1.3" stroke-dasharray="1.3 1.7"/><line x1="875" y1="368.5" x2="888" y2="368.5" stroke="#747474" stroke-width="1.3" stroke-dasharray="1.3 1.7"/><line x1="874.5" y1="400" x2="874.5" y2="416" stroke="#747474" stroke-width="1.3" stroke-dasharray="1.3 1.7"/><line x1="875" y1="416.5" x2="892" y2="416.5" stroke="#747474" stroke-width="1.3" stroke-dasharray="1.3 1.7"/><line x1="874.5" y1="448" x2="874.5" y2="479" stroke="#747474" stroke-width="1.3" stroke-dasharray="1.3 1.7"/><line x1="875" y1="464.5" x2="888" y2="464.5" stroke="#747474" stroke-width="1.3" stroke-dasharray="1.3 1.7"/><line x1="852" y1="224.5" x2="860" y2="224.5" stroke="#747474" stroke-width="1.3" stroke-dasharray="1.3 1.7"/><line x1="852" y1="392.5" x2="860" y2="392.5" stroke="#747474" stroke-width="1.3" stroke-dasharray="1.3 1.7"/><line x1="852" y1="440.5" x2="860" y2="440.5" stroke="#747474" stroke-width="1.3" stroke-dasharray="1.3 1.7"/></svg>
<div class="a" style="left:838.6px;top:218.0px;width:13px;height:13px;border:1px solid #8c8c8c;border-radius:2px;background:linear-gradient(#fdfdfd,#dcdcdc);"></div>
<div class="a" style="left:841.6px;top:223.9px;width:7px;height:1.6px;background:#4a62b8"></div>
<div class="a" style="left:838.6px;top:386.0px;width:13px;height:13px;border:1px solid #8c8c8c;border-radius:2px;background:linear-gradient(#fdfdfd,#dcdcdc);"></div>
<div class="a" style="left:841.6px;top:391.9px;width:7px;height:1.6px;background:#4a62b8"></div>
<div class="a" style="left:838.6px;top:434.0px;width:13px;height:13px;border:1px solid #8c8c8c;border-radius:2px;background:linear-gradient(#fdfdfd,#dcdcdc);"></div>
<div class="a" style="left:841.6px;top:439.9px;width:7px;height:1.6px;background:#4a62b8"></div>
<div class="t ff-s" style="top:167.61px;font-size:17px;line-height:17px;color:#000;left:946.2px;letter-spacing:-0.55px;">ReferenceActuator VAC1</div>
<div class="t ff-s" style="top:191.61px;font-size:17px;line-height:17px;color:#000;left:946.2px;letter-spacing:-0.55px;">ReferenceActuator VAC2</div>
<div class="t ff-s" style="top:215.61px;font-size:17px;line-height:17px;color:#000;left:860.7px;letter-spacing:-0.55px;">Nozzle Tips</div>
<div class="a" style="left:888px;top:237px;width:190.5px;height:23px;background:#0a78d7;outline:1px dotted #2a2a2a;outline-offset:-1px;"></div>
<div class="t ff-s" style="top:239.61px;font-size:17px;line-height:17px;color:#ffffff;left:889.5px;letter-spacing:-0.55px;">ReferenceNozzleTip N045</div>
<div class="t ff-s" style="top:263.61px;font-size:17px;line-height:17px;color:#000;left:889.2px;letter-spacing:-0.55px;">ReferenceNozzleTip N08</div>
<div class="t ff-s" style="top:287.61px;font-size:17px;line-height:17px;color:#000;left:889.2px;letter-spacing:-0.55px;">ReferenceNozzleTip N14</div>
<div class="t ff-s" style="top:311.61px;font-size:17px;line-height:17px;color:#000;left:889.2px;letter-spacing:-0.55px;">ReferenceNozzleTip N24</div>
<div class="t ff-s" style="top:335.61px;font-size:17px;line-height:17px;color:#000;left:889.2px;letter-spacing:-0.55px;">ReferenceNozzleTip N40</div>
<div class="t ff-s" style="top:359.61px;font-size:17px;line-height:17px;color:#000;left:889.2px;letter-spacing:-0.55px;">ReferenceNozzleTip N75</div>
<div class="t ff-s" style="top:383.61px;font-size:17px;line-height:17px;color:#000;left:860.7px;letter-spacing:-0.55px;">Cameras</div>
<svg style="left:0;top:0" width="1" height="1"><g fill="none" stroke="#1a6ee0" stroke-width="2.4">
<path d="M895 410 V405.5 H899.5 M915.5 405.5 H920 V410 M920 422 V426.5 H915.5 M899.5 426.5 H895 V422"/>
<circle cx="907.5" cy="416" r="4.5"/></g></svg>
<div class="t ff-s" style="top:407.61px;font-size:17px;line-height:17px;color:#000;left:931.5px;letter-spacing:-0.55px;">OpenPnpCaptureCamera Bottom</div>
<div class="t ff-s" style="top:431.61px;font-size:17px;line-height:17px;color:#000;left:860.7px;letter-spacing:-0.55px;">Actuators</div>
<div class="t ff-s" style="top:455.61px;font-size:17px;line-height:17px;color:#000;left:889.2px;letter-spacing:-0.55px;">ReferenceActuator LED</div>
<div class="a" style="left:830px;top:481px;width:1318px;height:6px;background:#f0f0f0"></div>
<div class="a" style="left:830px;top:482px;width:1318px;height:1.5px;background:#fdfdfd"></div>
<div class="a" style="left:830px;top:486.5px;width:1318px;height:2.5px;background:#6f6f6f"></div>
<div class="a" style="left:830px;top:486.5px;width:2px;height:839px;background:#6f6f6f"></div>
<div class="a" style="left:2147px;top:489px;width:1.5px;height:838px;background:#fcfcfc"></div>
<div class="a" style="left:830px;top:1325.5px;width:1318px;height:2px;background:#fcfcfc"></div>
<div class="a" style="left:832px;top:489px;width:1315px;height:1.2px;background:#e4e4e4"></div>
<div class="a" style="left:833px;top:520px;width:1310px;height:803px;background:#f0f0f0;border:1px solid #e0e0e0;box-shadow:inset 0 4px 0 #f7f7f7;"></div>
<div class="a" style="left:948px;top:494px;width:120.5px;height:26.5px;background:#f0f0f0;border:1px solid #dcdcdc;border-bottom:none;"></div>
<div class="t ff-s" style="top:498.61px;font-size:17px;line-height:17px;color:#000;left:955.7px;letter-spacing:-0.55px;">Part Detection</div>
<div class="a" style="left:1067.5px;top:494px;width:112.79999999999995px;height:26.5px;background:#f0f0f0;border:1px solid #dcdcdc;border-bottom:none;"></div>
<div class="t ff-s" style="top:498.61px;font-size:17px;line-height:17px;color:#000;left:1075.5px;letter-spacing:-0.55px;">Tool Changer</div>
<div class="a" style="left:1179.3px;top:494px;width:91.5px;height:26.5px;background:#f0f0f0;border:1px solid #dcdcdc;border-bottom:none;"></div>
<div class="t ff-s" style="top:498.61px;font-size:17px;line-height:17px;color:#000;left:1187.5px;letter-spacing:-0.55px;">Calibration</div>
<div class="a" style="left:833px;top:491px;width:116px;height:31px;background:#fafafa;border:1px solid #dcdcdc;border-bottom:none;"></div>
<div class="t ff-s" style="top:496.11px;font-size:17px;line-height:17px;color:#000;left:842.5px;letter-spacing:-0.55px;">Configuration</div>
<div class="a" style="left:838px;top:535px;width:1301px;height:115.5px;border:1px solid #d5d5d5;box-shadow:inset 1px 1px 0 #fbfbfb, 1px 1px 0 #fbfbfb;"></div>
<div class="a" style="left:842px;top:532px;width:82px;height:6px;background:#f0f0f0"></div>
<div class="t ff-s" style="top:527.21px;font-size:17px;line-height:17px;color:#000;left:846px;letter-spacing:-0.55px;">Properties</div>
<div class="a" style="left:838px;top:664.5px;width:1301px;height:183.5px;border:1px solid #d5d5d5;box-shadow:inset 1px 1px 0 #fbfbfb, 1px 1px 0 #fbfbfb;"></div>
<div class="a" style="left:842px;top:661.5px;width:90px;height:6px;background:#f0f0f0"></div>
<div class="t ff-s" style="top:656.11px;font-size:17px;line-height:17px;color:#000;left:846px;letter-spacing:-0.55px;">Dwell Times</div>
<div class="a" style="left:838px;top:862px;width:1301px;height:155.29999999999995px;border:1px solid #d5d5d5;box-shadow:inset 1px 1px 0 #fbfbfb, 1px 1px 0 #fbfbfb;"></div>
<div class="a" style="left:842.4px;top:859px;width:136px;height:6px;background:#f0f0f0"></div>
<div class="t ff-s" style="top:854.81px;font-size:17px;line-height:17px;color:#000;left:846.4px;letter-spacing:-0.55px;">Push and Drag Usage</div>
<div class="a" style="left:838px;top:1031.6px;width:1301px;height:232.4000000000001px;border:1px solid #d5d5d5;box-shadow:inset 1px 1px 0 #fbfbfb, 1px 1px 0 #fbfbfb;"></div>
<div class="a" style="left:842.4px;top:1028.6px;width:123px;height:6px;background:#f0f0f0"></div>
<div class="t ff-s" style="top:1024.11px;font-size:17px;line-height:17px;color:#000;left:846.4px;letter-spacing:-0.55px;">Part Dimensions</div>
<div class="t ff-s" style="top:565.61px;font-size:17px;line-height:17px;color:#000;right:1153px;text-align:right;letter-spacing:-0.55px;">Name</div>
<div class="a" style="left:1017px;top:559px;width:129px;height:29px;background:#ffffff;border:1px solid #a2a2aa;box-shadow:inset 0 0 0 1px #cfcfd4;"></div>
<div class="t ff-s" style="top:565.61px;font-size:17px;line-height:17px;color:#000;left:1021px;letter-spacing:-0.55px;">N045</div>
<div class="t ff-s" style="top:694.41px;font-size:17px;line-height:17px;color:#000;right:1153px;text-align:right;letter-spacing:-0.55px;">Pick Dwell Time (ms)</div>
<div class="a" style="left:1017px;top:687.8px;width:129px;height:29.0px;background:#ffffff;border:1px solid #a2a2aa;box-shadow:inset 0 0 0 1px #cfcfd4;"></div>
<div class="t ff-s" style="top:694.41px;font-size:17px;line-height:17px;color:#000;left:1021px;letter-spacing:-0.55px;">500</div>
<div class="t ff-s" style="top:733.81px;font-size:17px;line-height:17px;color:#000;right:1153px;text-align:right;letter-spacing:-0.55px;">Place Dwell Time (ms)</div>
<div class="a" style="left:1017px;top:727.2px;width:129px;height:28.899999999999977px;background:#ffffff;border:1px solid #a2a2aa;box-shadow:inset 0 0 0 1px #cfcfd4;"></div>
<div class="t ff-s" style="top:733.81px;font-size:17px;line-height:17px;color:#000;left:1021px;letter-spacing:-0.55px;">500</div>
<div class="t ff-s" style="top:767.91px;font-size:17px;line-height:17px;color:#000;left:851.5px;letter-spacing:-0.55px;">Note: Total Dwell Time is the sum of Nozzle Dwell Time plus the Nozzle Tip Dwell Time.</div>
<div class="t ff-s" style="top:892.21px;font-size:17px;line-height:17px;color:#000;right:1153px;text-align:right;letter-spacing:-0.55px;">Push &amp; Drag allowed?</div>
<div class="a" style="left:1023.2px;top:892.2px;width:19px;height:19px;border:1.2px solid #5e5e5e;border-radius:3px;background:#f6f6f6;"></div>
<div class="t ff-s" style="top:933.51px;font-size:17px;line-height:17px;color:#000;right:1153px;text-align:right;letter-spacing:-0.55px;">Outside Diameter</div>
<div class="a" style="left:1017px;top:926.9px;width:129px;height:28.300000000000068px;background:#ffffff;border:1px solid #a2a2aa;box-shadow:inset 0 0 0 1px #cfcfd4;"></div>
<div class="t ff-s" style="top:933.51px;font-size:17px;line-height:17px;color:#000;left:1021px;letter-spacing:-0.55px;">0.000</div>
<div class="t ff-s" style="top:1062.61px;font-size:17px;line-height:17px;color:#000;right:1153px;text-align:right;letter-spacing:-0.55px;">Min. Part Diameter</div>
<div class="a" style="left:1017px;top:1056px;width:129px;height:28.299999999999955px;background:#ffffff;border:1px solid #a2a2aa;box-shadow:inset 0 0 0 1px #cfcfd4;"></div>
<div class="t ff-s" style="top:1062.61px;font-size:17px;line-height:17px;color:#000;left:1021px;letter-spacing:-0.55px;">0.000</div>
<div class="t ff-s" style="top:1101.51px;font-size:17px;line-height:17px;color:#000;right:1153px;text-align:right;letter-spacing:-0.55px;">Max. Part Diameter</div>
<div class="a" style="left:1017px;top:1094.9px;width:129px;height:28.299999999999955px;background:#ffffff;border:1px solid #a2a2aa;box-shadow:inset 0 0 0 1px #cfcfd4;"></div>
<div class="t ff-s" style="top:1101.51px;font-size:17px;line-height:17px;color:#000;left:1021px;letter-spacing:-0.55px;">20.000</div>
<div class="t ff-s" style="top:1140.91px;font-size:17px;line-height:17px;color:#000;right:1153px;text-align:right;letter-spacing:-0.55px;">Max. Part Height</div>
<div class="a" style="left:1017px;top:1134.3px;width:129px;height:28.299999999999955px;background:#ffffff;border:1px solid #a2a2aa;box-shadow:inset 0 0 0 1px #cfcfd4;"></div>
<div class="t ff-s" style="top:1140.91px;font-size:17px;line-height:17px;color:#000;left:1021px;letter-spacing:-0.55px;">10.000</div>
<div class="t ff-s" style="top:1179.71px;font-size:17px;line-height:17px;color:#000;right:1153px;text-align:right;letter-spacing:-0.55px;">Max. Pick Tolerance</div>
<div class="a" style="left:1017px;top:1173.1px;width:129px;height:28.40000000000009px;background:#ffffff;border:1px solid #a2a2aa;box-shadow:inset 0 0 0 1px #cfcfd4;"></div>
<div class="t ff-s" style="top:1179.71px;font-size:17px;line-height:17px;color:#000;left:1021px;letter-spacing:-0.55px;">1.000</div>
<div class="a" style="left:1950px;top:1282.2px;width:85.70000000000005px;height:28.799999999999955px;background:#fafafa;border:1px solid #e6e6e6;border-radius:4px;"></div>
<div class="a" style="left:2049px;top:1282.2px;width:82.5px;height:28.799999999999955px;background:#fafafa;border:1px solid #e6e6e6;border-radius:4px;"></div>
<div class="t ff-s" style="top:1288.11px;font-size:17px;line-height:17px;color:#8b8b98;left:1592.8px;width:800px;text-align:center;letter-spacing:-0.55px;">Reset</div>
<div class="t ff-s" style="top:1288.11px;font-size:17px;line-height:17px;color:#8b8b98;left:1690.3000000000002px;width:800px;text-align:center;letter-spacing:-0.55px;">Apply</div>
<div class="a" style="left:9px;top:1334px;width:894px;height:26px;background:#f0f0f0;border-top:2px solid #838383;border-left:2px solid #838383;border-bottom:2px solid #ffffff;border-right:2px solid #ffffff;"></div>
<div class="a" style="left:925px;top:1334px;width:340px;height:26px;background:#f0f0f0;border-top:2px solid #838383;border-left:2px solid #838383;border-bottom:2px solid #ffffff;border-right:2px solid #ffffff;"></div>
<div class="t ff-s" style="top:1338.01px;font-size:17px;line-height:17px;color:#000;left:930px;letter-spacing:-0.3px;">Placements: 0 / 0 Total | 0 / 0 Selected Board</div>
<div class="a" style="left:1273px;top:1334.3px;width:300.5px;height:23.3px;background:#e6e6e6;border:1px solid #bcbcbc;"></div>
<div class="a" style="left:1274px;top:1335.5px;width:2.5px;height:21px;background:#0a6ad8"></div>
<div class="t ff-s" style="top:1334.61px;font-size:17px;line-height:17px;color:#3a78d8;left:1022px;width:800px;text-align:center;">0%</div>
<div class="a" style="left:1583px;top:1333px;width:568px;height:27px;background:#bfffbf;border-top:2px solid #6f8f6f;border-left:2px solid #6f8f6f;border-bottom:2.5px solid #ffffff;border-right:2.5px solid #ffffff;"></div>
<div class="t ff-m" style="top:1338.67px;font-size:20px;line-height:20px;color:#101010;left:1585.8px;">X:164.604</div>
<div class="t ff-m" style="top:1338.67px;font-size:20px;line-height:20px;color:#101010;left:1729.5px;">Y:113.695</div>
<div class="t ff-m" style="top:1338.67px;font-size:20px;line-height:20px;color:#101010;left:1874.6px;">Z:31.500</div>
<div class="t ff-m" style="top:1338.67px;font-size:20px;line-height:20px;color:#101010;left:2017.6px;">C:200.000</div>
<div class="a" style="left:0px;top:1367.5px;width:2160px;height:1.5px;background:#142e5e"></div>
<svg style="left:0;top:0" width="1" height="1"><path d="M0,1358 A10,10 0 0 0 10,1368 L0,1368 Z" fill="#0a6cd4"/><path d="M2160,1358 A10,10 0 0 1 2150,1368 L2160,1368 Z" fill="#0a6cd4"/></svg>
<svg style="left:0;top:0" width="1" height="1">
<path d="M1067.5 252.5 V275.5 L1072.8 270.6 L1076.8 279.5 L1080.2 278 L1076.3 269.4 L1083.5 269.4 Z" fill="#fff" stroke="#000" stroke-width="1"/>
</svg>
<svg style="left:0;top:0" width="1" height="1">
<rect x="831" y="211" width="255" height="55" rx="6" ry="6" fill="none" stroke="#ff0000" stroke-width="8"/>
<polygon points="1100.3,257.5 1146.9,275.6 1134.2,280.8 1635.4,703.3 1630.2,709.5 1129.0,287.0 1126.8,300.5" fill="#ff0000"/>
</svg>
</body></html>
